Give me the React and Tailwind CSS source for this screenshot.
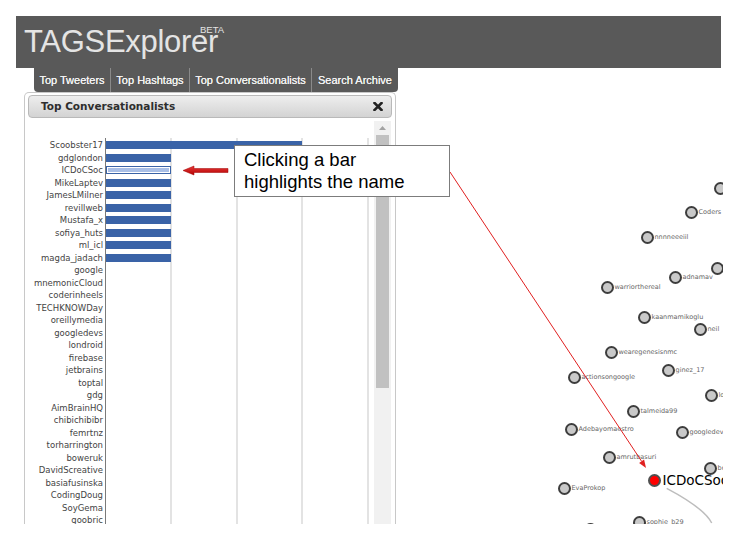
import React from "react";

const names = [
  "Scoobster17", "gdglondon", "ICDoCSoc", "MikeLaptev", "JamesLMilner",
  "revillweb", "Mustafa_x", "sofiya_huts", "ml_icl", "magda_jadach",
  "google", "mnemonicCloud", "coderinheels", "TECHKNOWDay", "oreillymedia",
  "googledevs", "londroid", "firebase", "jetbrains", "toptal", "gdg",
  "AimBrainHQ", "chibichibibr", "femrtnz", "torharrington", "boweruk",
  "DavidScreative", "basiafusinska", "CodingDoug", "SoyGema", "goobric",
];

// bar length in px, only the first ten have a bar
const barWidth = (i) => (i === 0 ? 196 : i < 10 ? 65 : 0);

const nodes = [
  { x: 324, y: 96, label: "" },
  { x: 295, y: 120, label: "Coders" },
  { x: 251, y: 145, label: "nnnneeeiil" },
  { x: 321, y: 176, label: "" },
  { x: 279, y: 185, label: "adnamav" },
  { x: 211, y: 195, label: "warriorthereal" },
  { x: 248, y: 225, label: "kaanmamikoglu" },
  { x: 304, y: 237, label: "neil" },
  { x: 215, y: 260, label: "wearegenesisnmc" },
  { x: 272, y: 278, label: "ginez_17" },
  { x: 178, y: 285, label: "actionsongoogle" },
  { x: 315, y: 303, label: "london" },
  { x: 237, y: 319, label: "talmeida99" },
  { x: 175, y: 337, label: "Adebayomaestro" },
  { x: 286, y: 340, label: "googledevs" },
  { x: 213, y: 365, label: "amrutbasuri" },
  { x: 314, y: 376, label: "bower" },
  { x: 168, y: 396, label: "EvaProkop" },
  { x: 243, y: 430, label: "sophie_b29" },
  { x: 194, y: 437, label: "" },
];

function Node({ x, y, label }) {
  return (
    <div
      className="absolute flex items-center gap-[1px]"
      style={{ left: x - 6.5, top: y - 6.5 }}
    >
      <div className="w-[13px] h-[13px] shrink-0 rounded-full bg-[#c9c9c9] border-2 border-[#3d3d3d]" />
      <span className="text-[6.5px] leading-none text-[#666] whitespace-nowrap">
        {label}
      </span>
    </div>
  );
}

const Tab = ({ label, w, first }) => (
  <div
    className={`${w} h-full flex items-center justify-center text-[11px] text-[#f2f2f2] whitespace-nowrap [text-shadow:0_0_0.6px_#fff] ${
      first ? "" : "border-l border-[#8a8a8a]"
    }`}
  >
    {label}
  </div>
);

export default function App() {
  return (
    <div className="relative w-[740px] h-[540px] bg-white overflow-hidden pt-4 pl-4 font-['Liberation_Sans',Arial,sans-serif]">
      {/* header */}
      <div className="relative w-[705px] h-[52px] bg-[#595959] pt-[10px] pl-[8px]">
        <span className="text-[31px] leading-[31px] tracking-[-0.3px] text-[#e4e4e4]">
          TAGSExplorer
        </span>
        <span className="absolute left-[184px] top-[9px] text-[9.5px] leading-[9.5px] text-[#e4e4e4]">
          BETA
        </span>
      </div>

      {/* tabs */}
      <div className="ml-[18px] flex h-[24px] w-[364px] bg-[#595959] rounded-b-[4px]">
        <Tab label="Top Tweeters" w="w-[76px]" first />
        <Tab label="Top Hashtags" w="w-[79px]" />
        <Tab label="Top Conversationalists" w="w-[122px]" />
        <Tab label="Search Archive" w="w-[87px]" />
      </div>

      <div className="flex w-[707px] h-[432px]">
        {/* chart panel */}
        <div className="ml-[8px] w-[372px] h-full border border-b-0 border-[#c8c8c8] rounded-t-[5px] pt-[2px] px-[3px] flex flex-col">
          <div className="h-[23px] shrink-0 rounded-[4px] border border-[#b9b9b9] bg-gradient-to-b from-[#eeeeee] to-[#d3d3d3] flex items-center justify-between pl-[12px] pr-[8px]">
            <span className="font-['DejaVu_Sans',Verdana,sans-serif] font-bold text-[10.5px] text-[#2e2e2e]">
              Top Conversationalists
            </span>
            <svg width="10" height="9" viewBox="0 0 10 9">
              <path d="M1.5 1 L8.5 8 M8.5 1 L1.5 8" stroke="#222" strokeWidth="2.6" strokeLinecap="square" />
            </svg>
          </div>

          <div className="flex flex-1 min-h-0">
            <div className="relative w-[346px] h-full overflow-hidden pt-[21px]">
              <svg className="absolute left-0 top-[20px]" width="346" height="400">
                {[143, 209, 274, 340].map((x) => (
                  <line key={x} x1={x} y1="0" x2={x} y2="400" stroke="#e3e3e3" strokeWidth="2" />
                ))}
                <line x1="77.5" y1="0" x2="77.5" y2="400" stroke="#7a7a7a" strokeWidth="1" />
              </svg>
              {names.map((n, i) => (
                <div key={n} className="relative flex items-center h-[12.53px]">
                  <div className="w-[77px] pr-[2px] text-right text-[8.5px] leading-none text-[#444] whitespace-nowrap font-['DejaVu_Sans',Verdana,sans-serif]">
                    {n}
                  </div>
                  {barWidth(i) > 0 &&
                    (n === "ICDoCSoc" ? (
                      <div className="ml-[1px] h-[8px] w-[65px] bg-[#3a63a7] p-[1px]">
                        <div className="h-full w-full border border-white bg-[#a9bfe6]" />
                      </div>
                    ) : (
                      <div
                        className="ml-[1px] h-[8px] bg-[#3a63a7]"
                        style={{ width: barWidth(i) }}
                      />
                    ))}
                </div>
              ))}
            </div>

            {/* scrollbar */}
            <div className="w-[17px] mt-[3px] mr-[1px] bg-[#f1f1f1] flex flex-col">
              <div className="h-[14px] flex items-center justify-center">
                <svg width="7" height="4" viewBox="0 0 7 4">
                  <path d="M0 4 L3.5 0 L7 4 Z" fill="#a3a3a3" />
                </svg>
              </div>
              <div className="mx-[2px] h-[253px] bg-[#c1c1c1]" />
            </div>
          </div>
        </div>

        {/* graph */}
        <div className="relative flex-1 h-full overflow-hidden font-['DejaVu_Sans',Verdana,sans-serif]">
          <svg className="absolute inset-0" width="327" height="432">
            <path d="M270.7 396.3 Q308 416 315.7 431" fill="none" stroke="#bdbdbd" strokeWidth="1.5" />
          </svg>
          {nodes.map((n, i) => (
            <Node key={i} {...n} />
          ))}
          <div className="absolute flex items-center gap-[2px]" style={{ left: 251.5, top: 381.5 }}>
            <div className="w-[13px] h-[13px] shrink-0 rounded-full bg-[#ff0000] border-2 border-[#505050]" />
            <span className="text-[13.5px] leading-none text-black whitespace-nowrap">ICDoCSoc</span>
          </div>
        </div>
      </div>

      {/* annotation overlay */}
      <svg className="absolute left-0 top-0 pointer-events-none" width="740" height="540">
        <defs>
          <linearGradient id="arrowFill" x1="0" y1="0" x2="0" y2="1">
            <stop offset="0" stopColor="#e83a3a" />
            <stop offset="1" stopColor="#b30000" />
          </linearGradient>
        </defs>
        <polygon
          points="183,170.5 194,166 194,168.5 228,168.5 228,172.5 194,172.5 194,175"
          fill="url(#arrowFill)"
          stroke="#a00000"
          strokeWidth="0.5"
        />
        <line x1="450" y1="172" x2="641.6" y2="461.3" stroke="#e02020" strokeWidth="1" />
        <polygon points="646,468 639.1,462.9 644.1,459.6" fill="#e02020" />
      </svg>

      {/* callout */}
      <div className="absolute left-[234px] top-[145px] w-[216px] h-[52px] bg-white border border-[#7c7c7c] pl-[9px] pt-[3px] text-[18.5px] leading-[21.5px] text-black">
        Clicking a bar
        <br />
        highlights the name
      </div>
    </div>
  );
}
